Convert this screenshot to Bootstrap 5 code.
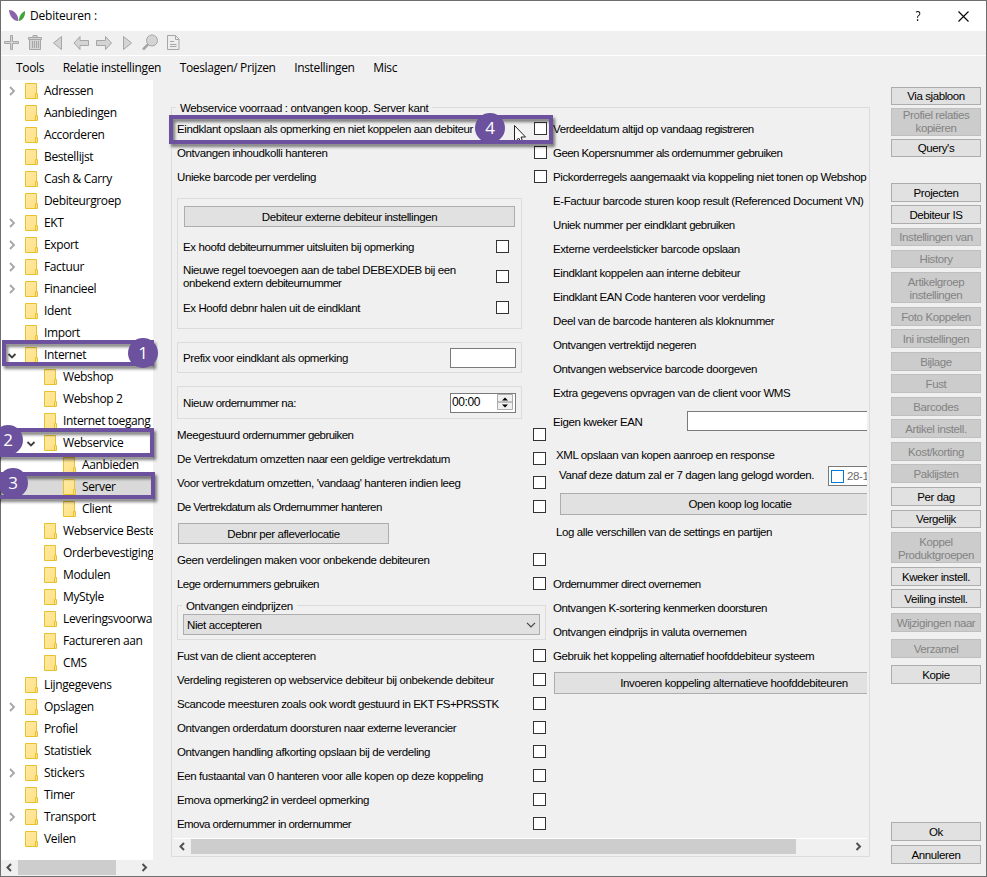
<!DOCTYPE html>
<html lang="nl">
<head>
<meta charset="utf-8">
<title>Debiteuren</title>
<link href="https://cdn.jsdelivr.net/npm/bootstrap@5.3.0/dist/css/bootstrap.min.css" rel="stylesheet">
<style>
body{margin:0;width:987px;height:877px;overflow:hidden;background:#f0f0f0;color:#000;font-size:12px}
.win{width:987px;height:877px;border:1px solid #6e6e6e;background:#f0f0f0;overflow:hidden}
.ui{font-family:"Open Sans","Noto Sans",sans-serif;font-size:12px;letter-spacing:-.37px;line-height:16px}
.ms{font-family:"Liberation Sans",Arial,sans-serif;font-size:11.5px;letter-spacing:-.4px;line-height:13px}
.tight{letter-spacing:-.57px}
.titlebar{height:30px;background:#fff}
.title-text{margin-left:3px;letter-spacing:-.22px}
.help-mark{font-size:14px;margin-right:37px;transform:scaleX(.85)}
.close-x{margin-right:17px}
.toolbar{height:24px;padding-top:1px}
.menubar{height:25px;border-top:1px solid #fff;padding-left:15px}
.menubar span{margin-right:18.600px;letter-spacing:-.34px}
.main{height:797px}
.tree{width:152px;height:780px;background:#fff;overflow:hidden}
.node{height:22px;padding-left:4px;white-space:nowrap}
.node .exp{width:14px;height:10px;flex:none}
.node .fold{width:13px;height:16px;flex:none;margin:0 6px}
.l1{padding-left:23px}.l2{padding-left:42px}
.chosen{background:#d9d9d9}
.sbar{height:15px}
.sbar svg{width:17px;height:15px;flex:none}
.thumb{background:#cdcdcd;height:15px}
.thumb-tree{width:98px}.thumb-main{width:605px}
.sbar-main{height:16px;border-top:1px solid #fff;margin:0 2px}
.content{width:699px;height:750px;margin:27px 0 0 18px;border:1px solid #dcdcdc}
.gl{background:#f0f0f0;margin:-7px 0 0 4px;padding:0 4px;width:max-content;height:13px;line-height:15px}
.content>.gl{letter-spacing:-.34px}
.cols{height:724px;padding:3px 0 0 5px;overflow:hidden}
.leftc{width:369px;flex:none}
.rightc{width:314px;flex:none;margin-left:7px;overflow:hidden;white-space:nowrap}
.ln{height:24px;white-space:nowrap}
.ln .cb{margin:0 0 2px auto}
.cb{width:13px;height:13px;border:1px solid #333;background:#fff;flex:none}
.ln.out .cb{margin-right:-1px}
.grp{border:1px solid #dcdcdc;width:345px;padding-left:5px}
.g1{height:131px;margin-top:9px;padding-top:7px}
.g1 .ln .cb{margin-right:12px}
.g1 .ln2{height:36px}
.g1 .ln3{height:26px}
.g2{height:31px;margin-top:13px}.g3{height:33px;margin:13px 0 4px}
.drop-1{padding-top:2px}
.g4{width:369px;height:35px;margin:9px 0 4px;padding:0}
.wb{background:#e1e1e1;border:1px solid #adadad;flex:none}
.wb.off{background:#ccc;border-color:#bfbfbf;color:#838383}
.b-ext{width:331px;height:21px;margin:0 0 8px 1px;padding-top:1px}
.b-afl{width:211px;height:21px;margin:4px 0 4px 1px;padding-top:1px}
.b-log{width:360px;height:22px;margin:7px 0 5px 7px}
.b-alt{width:360px;height:22px;margin:4px 0 0 1px}
.inp{background:#fff;border:1px solid #7a7a7a;height:20px;flex:none}
.in66{width:66px;margin:0 5px 0 auto}
.clock{padding:0 2px 0 1px}
.clock span{font-size:12px}
.in-ean{width:240px;margin-left:auto;margin-right:-60px}
.in-date{width:100px;margin-left:auto;margin-right:-61px;color:#6d6d6d;padding-left:2px}
.in-date .cb{border-color:#0078d7;margin:0 3px 0 0}
.ean{height:24px;margin:4px 0 10px}
.xml{height:23px;padding:2px 0 0 3px}
.since{height:20px;padding-left:6px}
.since>span{padding-bottom:2px}
.logall{margin-bottom:28px;padding-left:3px}
.drop{width:357px;height:21px;margin:2px 0 0 5px;padding:1px 3px 0}
.side{width:90px;margin:7px 0 0 21px}
.side .wb{height:19px;margin-bottom:3px;width:90px;padding-top:2px}
.side .h18{height:18px;padding-top:0}.side .h28{height:28px;padding-top:0}.side .h31{height:31px}
.side .m4{margin-bottom:4px}.side .m5{margin-bottom:5px}.side .m7{margin-bottom:7px}
.side .m26{margin-bottom:26px}.side .m138{margin-bottom:138px}
.hl{position:absolute;border:4px solid #6b519e;filter:drop-shadow(2px 3px 1.5px rgba(0,0,0,.5))}
.hl1{left:2px;top:340px;width:152px;height:26px}
.hl2{left:-4px;top:428px;width:158px;height:29px}
.hl3{left:-4px;top:472px;width:159px;height:27px}
.hl4{left:169px;top:115px;width:384px;height:29px}
.num{position:absolute;width:30px;height:30px;border-radius:50%;background:#6b519e;color:#fff;font:17px/29px "Open Sans",sans-serif;text-align:center}
.n1{left:128px;top:338px}.n2{left:-7px;top:425px}.n3{left:-2px;top:468px}.n4{left:475px;top:113px}
.arrow{position:absolute;left:513px;top:124px}
</style>
</head>
<body>
<svg width="0" height="0" class="position-absolute">
<defs>
<linearGradient id="fg" x1="0" y1="0" x2="1" y2="1"><stop offset="0" stop-color="#ffe9a2"/><stop offset="1" stop-color="#ffe084"/></linearGradient>
<symbol id="f" viewBox="0 0 13 16"><path d="M.5.5h11v10h1v5H.5z" fill="url(#fg)" stroke="#e8c22e"/><path d="M10.500 15.500v-5h1" fill="none" stroke="#e8c22e"/></symbol>
<symbol id="r" viewBox="0 0 14 10"><path d="M5 1l4 4-4 4" fill="none" stroke="#a6a6a6" stroke-width="1.800"/></symbol>
<symbol id="d" viewBox="0 0 14 10"><path d="M3.500 4l3.500 3.500L10.500 4" fill="none" stroke="#404040" stroke-width="1.800"/></symbol>
<symbol id="sl" viewBox="0 0 17 15"><path d="M10 4L6.500 7.500 10 11" fill="none" stroke="#505050" stroke-width="2"/></symbol>
<symbol id="sr" viewBox="0 0 17 15"><path d="M6.500 4L10 7.500 6.500 11" fill="none" stroke="#505050" stroke-width="2"/></symbol>
</defs></svg>
<div class="win">
<div class="titlebar ui d-flex align-items-center">
<svg width="18" height="14" class="ms-2" viewBox="0 0 18 14"><path d="M0 1c5 0 9 4 9.500 11C4 12 .5 7 0 1z" fill="#8a63a8"/><path d="M16 2c.5 5-2 9-6 10 0-5 2-8 6-10z" fill="#3fa535"/></svg>
<span class="title-text flex-grow-1">Debiteuren :</span>
<span class="help-mark">?</span>
<svg class="close-x" width="11" height="11" viewBox="0 0 11 11"><path d="M.5.5l10 10M10.500.5l-10 10" stroke="#000" stroke-width="1.100"/></svg>
</div>
<div class="toolbar"><svg class="d-block" width="200" height="22" viewBox="1 32 200 22" fill="#d4d4d4" stroke="#a6a6a6" stroke-linejoin="round">
<path d="M10.500 35.500h2v6h6v2h-6v6h-2v-6h-6v-2h6z"/>
<path d="M29.500 39.500h11v10h-11zM28.500 37.500h13v2h-13zM33 37v-1.500h4V37M32.500 41v7M34.500 41v7M36.500 41v7M38.500 41v7"/>
<path d="M61.500 36.500v13l-8-6.500z"/>
<path d="M74 43l6-6.500v4h8.500v5H80v4z"/>
<path d="M111.500 43l-6-6.500v4h-9v5h9v4z"/>
<path d="M123.500 36.500v13l8-6.500z"/>
<circle cx="152" cy="40.500" r="5.500"/><path d="M148 44.500l-5 5" stroke-width="2.500"/>
<path fill="#eee" d="M167.500 35.500h8l3.500 3.500v10.500h-11.500zM175.500 35.500v4h3.500M170 41.500h4M170 44.500h6.500M170 46.500h6.500"/>
</svg></div>
<div class="menubar ui d-flex align-items-center"><span>Tools</span><span>Relatie instellingen</span><span>Toeslagen/ Prijzen</span><span>Instellingen</span><span>Misc</span></div>
<div class="main d-flex">
<div>
<div class="tree ui">
<div class="node d-flex align-items-center"><svg class="exp"><use href="#r"/></svg><svg class="fold"><use href="#f"/></svg>Adressen</div>
<div class="node d-flex align-items-center"><i class="exp"></i><svg class="fold"><use href="#f"/></svg>Aanbiedingen</div>
<div class="node d-flex align-items-center"><i class="exp"></i><svg class="fold"><use href="#f"/></svg>Accorderen</div>
<div class="node d-flex align-items-center"><i class="exp"></i><svg class="fold"><use href="#f"/></svg>Bestellijst</div>
<div class="node d-flex align-items-center"><i class="exp"></i><svg class="fold"><use href="#f"/></svg>Cash &amp; Carry</div>
<div class="node d-flex align-items-center"><i class="exp"></i><svg class="fold"><use href="#f"/></svg>Debiteurgroep</div>
<div class="node d-flex align-items-center"><svg class="exp"><use href="#r"/></svg><svg class="fold"><use href="#f"/></svg>EKT</div>
<div class="node d-flex align-items-center"><svg class="exp"><use href="#r"/></svg><svg class="fold"><use href="#f"/></svg>Export</div>
<div class="node d-flex align-items-center"><svg class="exp"><use href="#r"/></svg><svg class="fold"><use href="#f"/></svg>Factuur</div>
<div class="node d-flex align-items-center"><svg class="exp"><use href="#r"/></svg><svg class="fold"><use href="#f"/></svg>Financieel</div>
<div class="node d-flex align-items-center"><i class="exp"></i><svg class="fold"><use href="#f"/></svg>Ident</div>
<div class="node d-flex align-items-center"><i class="exp"></i><svg class="fold"><use href="#f"/></svg>Import</div>
<div class="node d-flex align-items-center"><svg class="exp"><use href="#d"/></svg><svg class="fold"><use href="#f"/></svg>Internet</div>
<div class="node l1 d-flex align-items-center"><i class="exp"></i><svg class="fold"><use href="#f"/></svg>Webshop</div>
<div class="node l1 d-flex align-items-center"><i class="exp"></i><svg class="fold"><use href="#f"/></svg>Webshop 2</div>
<div class="node l1 d-flex align-items-center"><i class="exp"></i><svg class="fold"><use href="#f"/></svg>Internet toegang</div>
<div class="node l1 d-flex align-items-center"><svg class="exp"><use href="#d"/></svg><svg class="fold"><use href="#f"/></svg>Webservice</div>
<div class="node l2 d-flex align-items-center"><i class="exp"></i><svg class="fold"><use href="#f"/></svg>Aanbieden</div>
<div class="node l2 chosen d-flex align-items-center"><i class="exp"></i><svg class="fold"><use href="#f"/></svg>Server</div>
<div class="node l2 d-flex align-items-center"><i class="exp"></i><svg class="fold"><use href="#f"/></svg>Client</div>
<div class="node l1 d-flex align-items-center"><i class="exp"></i><svg class="fold"><use href="#f"/></svg>Webservice Beste</div>
<div class="node l1 d-flex align-items-center"><i class="exp"></i><svg class="fold"><use href="#f"/></svg>Orderbevestiging</div>
<div class="node l1 d-flex align-items-center"><i class="exp"></i><svg class="fold"><use href="#f"/></svg>Modulen</div>
<div class="node l1 d-flex align-items-center"><i class="exp"></i><svg class="fold"><use href="#f"/></svg>MyStyle</div>
<div class="node l1 d-flex align-items-center"><i class="exp"></i><svg class="fold"><use href="#f"/></svg>Leveringsvoorwa</div>
<div class="node l1 d-flex align-items-center"><i class="exp"></i><svg class="fold"><use href="#f"/></svg>Factureren aan</div>
<div class="node l1 d-flex align-items-center"><i class="exp"></i><svg class="fold"><use href="#f"/></svg>CMS</div>
<div class="node d-flex align-items-center"><i class="exp"></i><svg class="fold"><use href="#f"/></svg>Lijngegevens</div>
<div class="node d-flex align-items-center"><svg class="exp"><use href="#r"/></svg><svg class="fold"><use href="#f"/></svg>Opslagen</div>
<div class="node d-flex align-items-center"><i class="exp"></i><svg class="fold"><use href="#f"/></svg>Profiel</div>
<div class="node d-flex align-items-center"><i class="exp"></i><svg class="fold"><use href="#f"/></svg>Statistiek</div>
<div class="node d-flex align-items-center"><svg class="exp"><use href="#r"/></svg><svg class="fold"><use href="#f"/></svg>Stickers</div>
<div class="node d-flex align-items-center"><i class="exp"></i><svg class="fold"><use href="#f"/></svg>Timer</div>
<div class="node d-flex align-items-center"><svg class="exp"><use href="#r"/></svg><svg class="fold"><use href="#f"/></svg>Transport</div>
<div class="node d-flex align-items-center"><i class="exp"></i><svg class="fold"><use href="#f"/></svg>Veilen</div>
</div>
<div class="sbar d-flex"><svg><use href="#sl"/></svg><div class="thumb thumb-tree"></div><svg class="ms-auto"><use href="#sr"/></svg></div>
</div>
<div class="content ms">
<div class="gl">Webservice voorraad : ontvangen koop. Server kant</div>
<div class="cols d-flex">
<div class="leftc">
<div class="ln out d-flex align-items-center">Eindklant opslaan als opmerking en niet koppelen aan debiteur<i class="cb"></i></div>
<div class="ln out d-flex align-items-center">Ontvangen inhoudkolli hanteren<i class="cb"></i></div>
<div class="ln out d-flex align-items-center">Unieke barcode per verdeling<i class="cb"></i></div>
<div class="grp g1">
<div class="wb b-ext d-flex align-items-center justify-content-center">Debiteur externe debiteur instellingen</div>
<div class="ln d-flex align-items-center"><span>Ex hoofd <span class="tight">debiteurnummer</span> uitsluiten bij opmerking</span><i class="cb"></i></div>
<div class="ln ln2 d-flex align-items-center"><span>Nieuwe regel toevoegen aan de tabel DEBEXDEB bij een<br>onbekend extern <span class="tight">debiteurnummer</span></span><i class="cb"></i></div>
<div class="ln ln3 d-flex align-items-center">Ex Hoofd debnr halen uit de eindklant<i class="cb"></i></div>
</div>
<div class="grp g2 d-flex align-items-center"><span class="drop-1">Prefix voor eindklant als opmerking</span><div class="inp in66"></div></div>
<div class="grp g3 d-flex align-items-center"><span class="drop-1">Nieuw <span class="tight">ordernummer</span> na:</span><div class="inp in66 clock d-flex align-items-center justify-content-between"><span>00:00</span><svg width="16" height="17" viewBox="0 0 16 17"><path d="M.5.5h15v15H.5z" fill="#f0f0f0" stroke="#adadad"/><path d="M.5 8h15" stroke="#8c8c8c"/><path d="M5 6.500L8 3.500l3 3zM5 10.500l3 3 3-3z"/></svg></div></div>
<div class="ln d-flex align-items-center"><span>Meegestuurd <span class="tight">ordernummer gebruiken</span></span><i class="cb"></i></div>
<div class="ln d-flex align-items-center"><span class="text-nowrap">De Vertrekdatum omzetten <span class="tight">naar een</span> geldige vertrekdatum</span><i class="cb"></i></div>
<div class="ln d-flex align-items-center">Voor vertrekdatum omzetten, 'vandaag' hanteren indien leeg<i class="cb"></i></div>
<div class="ln d-flex align-items-center"><span class="tight">De Vertrekdatum als Ordernummer hanteren</span><i class="cb"></i></div>
<div class="wb b-afl d-flex align-items-center justify-content-center">Debnr per afleverlocatie</div>
<div class="ln d-flex align-items-center">Geen verdelingen maken voor onbekende debiteuren<i class="cb"></i></div>
<div class="ln d-flex align-items-center"><span class="tight">Lege ordernummers gebruiken</span><i class="cb"></i></div>
<div class="grp g4"><div class="gl">Ontvangen eindprijzen</div><div class="wb drop d-flex align-items-center justify-content-between">Niet accepteren<svg width="10" height="6" viewBox="0 0 10 6"><path d="M1 .8l4 4 4-4" fill="none" stroke="#444" stroke-width="1.200"/></svg></div></div>
<div class="ln d-flex align-items-center">Fust van de client accepteren<i class="cb"></i></div>
<div class="ln d-flex align-items-center">Verdeling registeren op webservice debiteur bij onbekende debiteur<i class="cb"></i></div>
<div class="ln d-flex align-items-center"><span>Scancode meesturen zoals ook wordt gestuurd in <span class="tight">EKT FS+PRSSTK</span></span><i class="cb"></i></div>
<div class="ln d-flex align-items-center"><span>Ontvangen orderdatum doorsturen <span class="tight">naar externe</span> leverancier</span><i class="cb"></i></div>
<div class="ln d-flex align-items-center">Ontvangen handling afkorting opslaan bij de verdeling<i class="cb"></i></div>
<div class="ln d-flex align-items-center">Een fustaantal van 0 hanteren voor alle kopen op deze koppeling<i class="cb"></i></div>
<div class="ln d-flex align-items-center"><span class="text-nowrap">Emova <span class="tight">opmerking2 in</span> verdeel opmerking</span><i class="cb"></i></div>
<div class="ln d-flex align-items-center"><span class="tight">Emova ordernummer in ordernummer</span><i class="cb"></i></div>
</div>
<div class="rightc">
<div class="ln d-flex align-items-center"><span>Verdeeldatum altijd op vandaag <span class="tight">registreren</span></span></div>
<div class="ln d-flex align-items-center"><span class="tight">Geen Kopersnummer als ordernummer gebruiken</span></div>
<div class="ln d-flex align-items-center">Pickorderregels aangemaakt via koppeling niet tonen op Webshop</div>
<div class="ln d-flex align-items-center">E-Factuur barcode sturen koop result (Referenced Document VN)</div>
<div class="ln d-flex align-items-center"><span>Uniek nummer per eindklant <span class="tight">gebruiken</span></span></div>
<div class="ln d-flex align-items-center">Externe verdeelsticker barcode opslaan</div>
<div class="ln d-flex align-items-center">Eindklant koppelen aan interne debiteur</div>
<div class="ln d-flex align-items-center">Eindklant EAN Code hanteren voor verdeling</div>
<div class="ln d-flex align-items-center">Deel van de barcode hanteren als kloknummer</div>
<div class="ln d-flex align-items-center">Ontvangen vertrektijd negeren</div>
<div class="ln d-flex align-items-center">Ontvangen webservice barcode doorgeven</div>
<div class="ln d-flex align-items-center">Extra gegevens opvragen van de client voor WMS</div>
<div class="ean d-flex align-items-center"><span class="drop-1">Eigen kweker EAN</span><div class="inp in-ean"></div></div>
<div class="xml d-flex align-items-center">XML opslaan van kopen aanroep en response</div>
<div class="since d-flex align-items-center"><span>Vanaf deze datum zal er 7 dagen lang gelogd worden.</span><div class="inp in-date d-flex align-items-center"><i class="cb"></i>28-1</div></div>
<div class="wb b-log d-flex align-items-center justify-content-center">Open koop log locatie</div>
<div class="ln logall d-flex align-items-center">Log alle verschillen van de settings en partijen</div>
<div class="ln d-flex align-items-center"><span class="tight">Ordernummer direct overnemen</span></div>
<div class="ln d-flex align-items-center"><span>Ontvangen K-sortering <span class="tight">kenmerken doorsturen</span></span></div>
<div class="ln d-flex align-items-center">Ontvangen eindprijs in valuta overnemen</div>
<div class="ln d-flex align-items-center"><span>Gebruik het koppeling <span class="tight">alternatief</span> hoofddebiteur systeem</span></div>
<div class="wb b-alt d-flex align-items-center justify-content-center">Invoeren koppeling alternatieve hoofddebiteuren</div>
</div>
</div>
<div class="sbar sbar-main d-flex"><svg><use href="#sl"/></svg><div class="thumb thumb-main"></div><svg class="ms-auto"><use href="#sr"/></svg></div>
</div>
<div class="side ms text-center">
<div class="wb h18 d-flex align-items-center justify-content-center">Via sjabloon</div>
<div class="wb off h28 d-flex align-items-center justify-content-center">Profiel relaties<br>kopiëren</div>
<div class="wb h18 m26 d-flex align-items-center justify-content-center">Query's</div>
<div class="wb d-flex align-items-center justify-content-center">Projecten</div>
<div class="wb m4 d-flex align-items-center justify-content-center">Debiteur IS</div>
<div class="wb off h18 m4 d-flex align-items-center justify-content-center">Instellingen van</div>
<div class="wb off h18 m4 d-flex align-items-center justify-content-center">History</div>
<div class="wb off h31 m4 d-flex align-items-center justify-content-center"><span>Artikelgroep<br>instellingen</span></div>
<div class="wb off d-flex align-items-center justify-content-center">Foto Koppelen</div>
<div class="wb off m4 d-flex align-items-center justify-content-center">Ini instellingen</div>
<div class="wb off d-flex align-items-center justify-content-center">Bijlage</div>
<div class="wb off m4 d-flex align-items-center justify-content-center">Fust</div>
<div class="wb off d-flex align-items-center justify-content-center">Barcodes</div>
<div class="wb off m4 d-flex align-items-center justify-content-center">Artikel instell.</div>
<div class="wb off d-flex align-items-center justify-content-center">Kost/korting</div>
<div class="wb off m4 d-flex align-items-center justify-content-center">Paklijsten</div>
<div class="wb m4 d-flex align-items-center justify-content-center">Per dag</div>
<div class="wb h18 m4 d-flex align-items-center justify-content-center">Vergelijk</div>
<div class="wb off h31 m4 d-flex align-items-center justify-content-center"><span>Koppel<br>Produktgroepen</span></div>
<div class="wb d-flex align-items-center justify-content-center">Kweker instell.</div>
<div class="wb m5 d-flex align-items-center justify-content-center">Veiling instell.</div>
<div class="wb off m7 d-flex align-items-center justify-content-center">Wijzigingen naar</div>
<div class="wb off m7 d-flex align-items-center justify-content-center">Verzamel</div>
<div class="wb m138 d-flex align-items-center justify-content-center">Kopie</div>
<div class="wb m4 d-flex align-items-center justify-content-center">Ok</div>
<div class="wb d-flex align-items-center justify-content-center">Annuleren</div>
</div>
</div>
</div>
<svg class="arrow" width="14" height="16" viewBox="0 0 14 16"><path d="M1.500 1.500v15h2l2-2.500 2 3h2l-1.500-4h4.500z" fill="#fff" stroke="#222"/></svg>
<div class="hl hl1"></div><div class="hl hl2"></div><div class="hl hl3"></div><div class="hl hl4"></div>
<div class="num n1">1</div><div class="num n2">2</div><div class="num n3">3</div><div class="num n4">4</div>
</body>
</html>
